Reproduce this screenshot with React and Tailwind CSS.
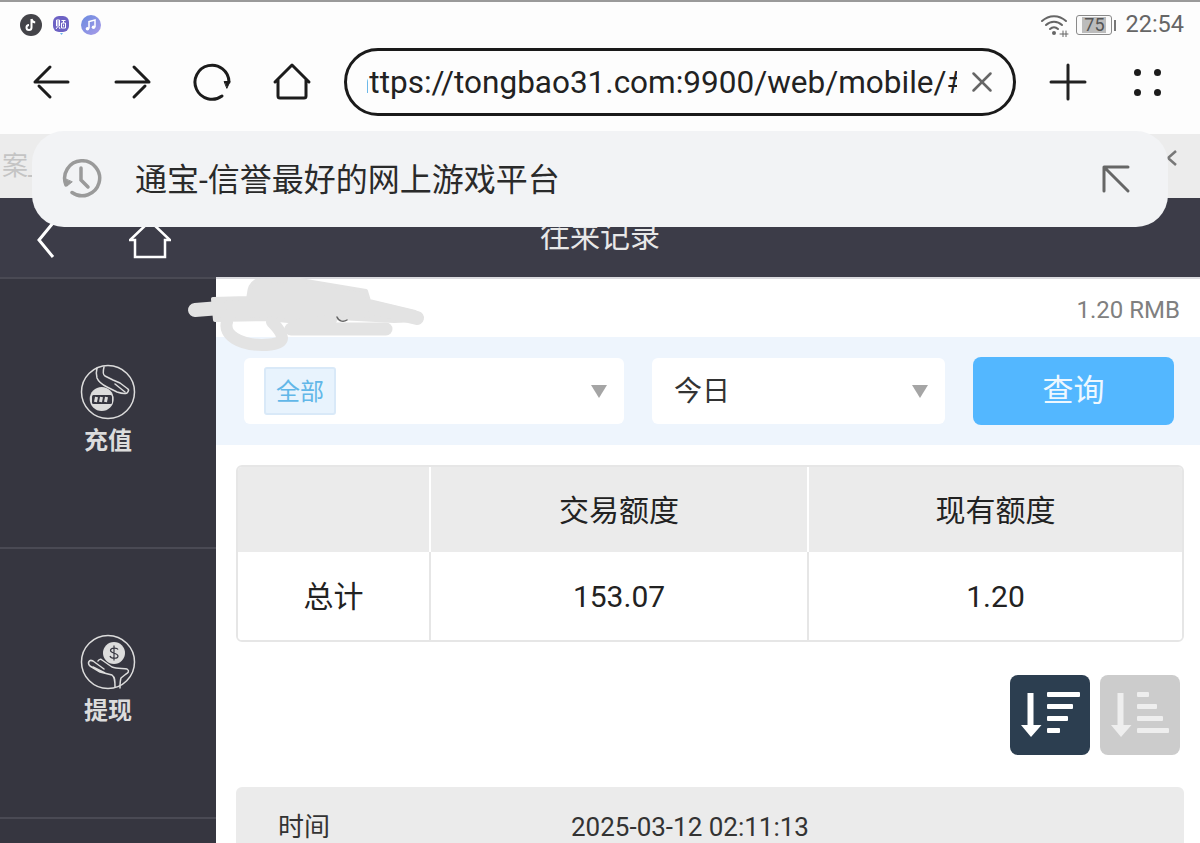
import { X } from "lucide-react";

const cjk = { fontFamily: 'Roboto, "Noto Sans CJK SC", sans-serif' };

const NavIcon = ({ children, className = "" }) => (
  <svg width="44" height="44" viewBox="0 0 44 44" fill="none" stroke="#1c1c1c" strokeWidth="3" strokeLinecap="round" strokeLinejoin="round" className={className}>
    {children}
  </svg>
);

const AppDots = () => (
  <div className="flex items-center">
    <svg width="22" height="22" viewBox="0 0 22 22" className="ml-[20px]">
      <circle cx="11" cy="11" r="11" fill="#444449" />
      <path d="M11.5 5v8.5a2.5 2.5 0 1 1-2.500-2.500M11.500 5c.4 2 1.700 3.200 3.700 3.400" fill="none" stroke="#fff" strokeWidth="2" />
    </svg>
    <svg width="18" height="20" viewBox="0 0 18 20" className="ml-[10px]">
      <rect x="1" y="1" width="16" height="16" rx="6" fill="#6d62c4" />
      <path d="M8 18l1.500 2 1.500-2z" fill="#6cb8ee" />
      <path d="M4.500 5h3v6h-3zM6 6v4M4 14l1.500-2M8 14l-1-2M9.500 5.500h4M11.500 5.500v2.500M9.500 8h4v5h-4zM11.500 9.500v2" fill="none" stroke="#fff" strokeWidth="1" />
    </svg>
    <svg width="20" height="20" viewBox="0 0 20 20" className="ml-[11px]">
      <defs>
        <linearGradient id="music" x1="0" y1="0" x2="1" y2="1">
          <stop offset="0" stopColor="#6a8be0" />
          <stop offset="1" stopColor="#a99be8" />
        </linearGradient>
      </defs>
      <circle cx="10" cy="10" r="10" fill="url(#music)" />
      <path d="M8 13.500V6.500l6-1.500v7" fill="none" stroke="#fff" strokeWidth="1.500" />
      <circle cx="6.500" cy="13.800" r="1.800" fill="#fff" />
      <circle cx="12.500" cy="12.300" r="1.800" fill="#fff" />
    </svg>
  </div>
);

const StatusRight = () => (
  <div className="ml-auto flex items-center pr-[16px]">
    <svg width="30" height="24" viewBox="0 0 30 24" fill="none" stroke="#666" strokeWidth="2" strokeLinecap="round">
      <path d="M2 8c7-6.500 17-6.500 24 0M6 12c4.500-4.500 11.500-4.500 16 0M10 16c2.500-2.500 5.500-2.500 8 0" />
      <circle cx="14" cy="20" r="2" fill="#666" stroke="none" />
      <path d="M20 21h8M23 18v6M26 18v6" strokeWidth="1" />
    </svg>
    <div className="relative ml-[6px] flex h-[20px] w-[36px] items-center justify-center rounded-[3px] border border-[#8a8a8a] bg-[#fafafa] p-[1px]">
      <div className="flex h-full w-[75%] self-start bg-[#bcbcbc]" />
      <span className="absolute inset-0 text-center text-[18px] leading-[18px] text-[#555]" style={cjk}>75</span>
    </div>
    <div className="ml-[2px] h-[11px] w-[2px] bg-[#777]" />
    <span className="ml-[9px] text-[23.500px] leading-none text-[#666]" style={cjk}>22:54</span>
  </div>
);

const Toolbar = () => (
  <div className="flex h-[90px] items-center bg-[#fdfdfd] pb-[14px]">
    <div className="ml-[30px] flex w-[284px] items-center gap-[36px]">
      <NavIcon>
        <path d="M5 22h33M20 7L5 22M20 37L9 26" />
      </NavIcon>
      <NavIcon>
        <path d="M6 22h33M24 7l15 15M24 37l11-11" />
      </NavIcon>
      <NavIcon>
        <path d="M32 36A17 17 0 1 1 39 22" />
        <path d="M34.500 21.500H40L37 28z" fill="#1c1c1c" strokeWidth="1" />
      </NavIcon>
      <NavIcon>
        <path d="M5 22L22 5l17 17M8 20v16a2 2 0 0 0 2 2h24a2 2 0 0 0 2-2V20" />
      </NavIcon>
    </div>
    <div className="ml-[30px] flex h-[68px] w-[672px] items-center rounded-[34px] border-[3px] border-[#1a1a1a] pl-[20px] pr-[14px]">
      <div className="w-[590px] overflow-hidden whitespace-nowrap pt-[2px] text-[31.500px] leading-[40px] text-[#222]" style={cjk}>
        <span className="-ml-[15px] inline-block">https://tongbao31.com:9900/web/mobile/#/record</span>
      </div>
      <X size={34} strokeWidth={1.800} className="ml-auto text-[#666]" />
    </div>
    <svg width="44" height="44" viewBox="0 0 44 44" fill="none" stroke="#222" strokeWidth="3" strokeLinecap="round" className="ml-[30px]">
      <path d="M5 22h34M22 5v34" />
    </svg>
    <div className="ml-[44px] grid grid-cols-2 gap-x-[13px] gap-y-[13px]">
      <i className="h-[7px] w-[7px] rounded-full bg-[#1c1c1c]" />
      <i className="h-[7px] w-[7px] rounded-full bg-[#1c1c1c]" />
      <i className="h-[7px] w-[7px] rounded-full bg-[#1c1c1c]" />
      <i className="h-[7px] w-[7px] rounded-full bg-[#1c1c1c]" />
    </div>
  </div>
);

const SuggestPopup = () => (
  <div className="absolute left-[32px] top-[131px] flex h-[96px] w-[1136px] items-center rounded-[32px] bg-[#f2f3f5]">
    <svg width="40" height="40" viewBox="0 0 40 40" fill="none" stroke="#9a9a9a" strokeWidth="3.500" strokeLinecap="round" className="ml-[30px]">
      <path d="M4 26a17.500 17.500 0 1 1 6 7.500" />
      <path d="M3 20l2 7 5-4z" fill="#9a9a9a" strokeWidth="1" />
      <path d="M19 9v12l7 7" />
    </svg>
    <span className="ml-[33px] mt-[2px] text-[32px] text-[#2a2a2a]" style={cjk}>通宝-信誉最好的网上游戏平台</span>
    <svg width="30" height="30" viewBox="0 0 30 30" fill="none" stroke="#666" strokeWidth="3" strokeLinecap="round" className="ml-auto mr-[37px]">
      <path d="M3 3h24M3 3v24M5 5l22 22" />
    </svg>
  </div>
);

// the scribble someone drew over the account name
const Scribble = () => (
  <svg width="260" height="85" viewBox="180 275 260 85" fill="none" stroke="#e3e3e3" strokeLinecap="round" strokeLinejoin="round" className="absolute left-[180px] top-[275px]">
    <path d="M213 299l35-1c2-6 0-12 8-17l44-1 66 11 3 10 46 11 3 8-24 1-55-3-40 4-32-3-52 1z" fill="#e3e3e3" strokeWidth="4" />
    <path d="M195 310l25-2" strokeWidth="14" />
    <path d="M375 308l42 10" strokeWidth="14" />
    <path d="M300 323l32-3" strokeWidth="10" />
    <path d="M291 329h95" strokeWidth="13" />
    <path d="M227 322c-4 13 13 23 35 23 23 0 26-7 10-23" strokeWidth="12" />
    <path d="M337 317c2 5 7 5 10 3" stroke="#666" strokeWidth="1.500" />
  </svg>
);

const RechargeIcon = () => (
  <svg width="56" height="56" viewBox="0 0 56 56" fill="none" stroke="#dcdcdc" strokeWidth="1.500">
    <circle cx="28" cy="28" r="26.500" />
    <path d="M17 4c-1 4-1 7 0 10 2 5 6 7 10 9l10 5c3 1 8 2 10 1 2-2 2-3 1-4l-8-6-7-3-8-4c-2-1-2-5-1-9" strokeLinecap="round" strokeLinejoin="round" />
    <path d="M35 20l10 8" strokeLinecap="round" />
    <circle cx="21.700" cy="35" r="12" fill="#dcdcdc" stroke="none" />
    <rect x="12" y="31" width="20" height="9" rx="1.500" fill="#363640" stroke="none" />
    <path d="M16.500 33l-1 5M21.500 33l-1 5M26.500 33l-1 5" stroke="#dcdcdc" strokeWidth="3" />
  </svg>
);

const WithdrawIcon = () => (
  <svg width="56" height="56" viewBox="0 0 56 56" fill="none" stroke="#dcdcdc" strokeWidth="1.500">
    <circle cx="28" cy="28" r="26.500" />
    <circle cx="34" cy="19" r="11" fill="#dcdcdc" stroke="none" />
    <path d="M38 15.500c-1-2-7.500-2-7.500 1s7.500 2.500 7.500 5.500-7 3-8 0M34 11.500v15" stroke="#363640" strokeWidth="1.200" />
    <path d="M35 53c0-6 0-10-3-12L20 38 10 32c-3-3-1-7 3-5l11 8M18 27c1-2 3-2 4-1l10 7c5 2 12 1 15 2 3 2 1 4-1 5l-5 4c-1 3-1 7-1 10M13 33l12 6" strokeLinecap="round" strokeLinejoin="round" />
  </svg>
);

const SideItem = ({ icon, label }) => (
  <div className="flex h-[270px] flex-col items-center border-b-2 border-[#4a4a54] pt-[85px]">
    {icon}
    <span className="mt-[4px] text-[24px] font-bold leading-[34px] text-[#dcdcdc]" style={cjk}>{label}</span>
  </div>
);

const Arrow = () => <div className="h-0 w-0 border-x-[8px] border-t-[13px] border-x-transparent border-t-[#a5a5a5]" />;

const SortIcon = ({ bars, fill = "#fff" }) => (
  <svg width="80" height="80" viewBox="0 0 80 80" fill={fill}>
    <path d="M17.500 18h6v32h8L21 62 11 50h6.500z" />
    {bars.map(([y, w]) => (
      <rect key={y} x="37" y={y} width={w} height="5" rx="1" />
    ))}
  </svg>
);

export default function App() {
  return (
    <div className="relative h-[843px] w-[1200px] overflow-hidden bg-white" style={cjk}>
      <div className="flex h-[44px] items-center border-t-2 border-[#9a9a9a] bg-[#fdfdfd] pt-[4px]">
        <AppDots />
        <StatusRight />
      </div>
      <Toolbar />

      <div className="flex h-[64px] items-center justify-between bg-[#ececec] pl-[2px] pr-[22px]">
        <span className="text-[26px] text-[#c4c4c4]">案_</span>
        <svg width="12" height="20" viewBox="0 0 12 20" fill="none" stroke="#777" strokeWidth="2.500" className="-mt-[14px]">
          <path d="M10 2L2 9l8 7" />
        </svg>
      </div>

      <header className="relative flex h-[79px] items-center justify-center bg-[#3c3c48]">
        <svg width="24" height="40" viewBox="0 0 24 40" fill="none" stroke="#fff" strokeWidth="3" className="absolute left-[36px] top-[22px]">
          <path d="M17 3L3 20l14 17" />
        </svg>
        <svg width="42" height="42" viewBox="0 0 42 42" fill="none" stroke="#fff" strokeWidth="2.500" className="absolute left-[129px] top-[20px]">
          <path d="M21 3L1 22h5v17h30V22h5z" />
        </svg>
        <span className="-mt-[3px] text-[30px] text-[#e8e8e8]">往来记录</span>
      </header>

      <div className="flex">
        <aside className="h-[566px] w-[216px] shrink-0 border-t-2 border-[#4a4a54] bg-[#363640]">
          <SideItem icon={<RechargeIcon />} label="充值" />
          <SideItem icon={<WithdrawIcon />} label="提现" />
        </aside>

        <main className="min-w-0 flex-1 border-t-2 border-[#dcdce0]">
          <div className="flex h-[58px] items-center justify-end pr-[20px] text-[24px] text-[#808080] shadow-[0_2px_4px_rgba(0,0,0,0.04)]">
            <span className="mt-[3px]">1.20 RMB</span>
          </div>

          <div className="flex h-[108px] items-center bg-[#eef5fd] pl-[28px]">
            <div className="flex h-[66px] w-[380px] items-center rounded-[6px] bg-white pl-[20px] pr-[17px]">
              <span className="flex h-[48px] w-[72px] items-center justify-center rounded-[3px] border-2 border-[#d9e9f8] bg-[#e8f3fd] pt-[2px] text-[24px] text-[#62b7e8]">全部</span>
              <div className="ml-auto"><Arrow /></div>
            </div>
            <div className="ml-[28px] flex h-[66px] w-[293px] items-center rounded-[6px] bg-white pl-[22px] pr-[17px]">
              <span className="pt-[2px] text-[28px] text-[#333]">今日</span>
              <div className="ml-auto"><Arrow /></div>
            </div>
            <button className="ml-[28px] h-[68px] w-[201px] rounded-[8px] bg-[#53b7ff] text-[31px] text-[#eef8ff]">查询</button>
          </div>

          <div className="ml-[20px] mr-[16px] mt-[20px] overflow-hidden rounded-[6px] border-2 border-[#e6e6e6] text-[30px] text-[#222]">
            <div className="grid h-[85px] grid-cols-[191px_378px_1fr] bg-[#ebebeb]">
              <div />
              <div className="flex items-center justify-center border-l-2 border-white pt-[1px]">交易额度</div>
              <div className="flex items-center justify-center border-l-2 border-white pt-[1px]">现有额度</div>
            </div>
            <div className="grid h-[88px] grid-cols-[191px_378px_1fr] bg-white">
              <div className="flex items-center justify-center">总计</div>
              <div className="flex items-center justify-center border-l-2 border-[#e6e6e6]">153.07</div>
              <div className="flex items-center justify-center border-l-2 border-[#e6e6e6]">1.20</div>
            </div>
          </div>

          <div className="mt-[33px] flex justify-end gap-[10px] pr-[20px]">
            <button className="h-[80px] w-[80px] rounded-[8px] bg-[#2c3e50]">
              <SortIcon bars={[[17, 33], [29, 26], [41, 21], [53, 13]]} />
            </button>
            <button className="h-[80px] w-[80px] rounded-[8px] bg-[#cccccc]">
              <SortIcon fill="#eeeeee" bars={[[17, 12], [29, 20], [41, 26], [53, 32]]} />
            </button>
          </div>

          <div className="ml-[20px] mr-[16px] mt-[32px] flex h-[80px] rounded-t-[6px] bg-[#ebebeb] pt-[24px] text-[26px] leading-[32px] text-[#333]">
            <span className="ml-[42px] w-[293px]">时间</span>
            <span>2025-03-12 02:11:13</span>
          </div>
        </main>
      </div>

      <Scribble />
      <SuggestPopup />
    </div>
  );
}
